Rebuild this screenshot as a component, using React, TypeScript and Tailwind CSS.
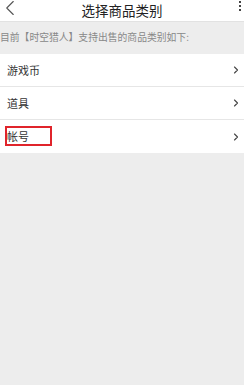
import { ChevronLeft, ChevronRight } from "lucide-react";

const CATEGORIES = ["游戏币", "道具", "帐号"];

const font = "font-['Noto_Sans_CJK_SC','Noto_Sans',sans-serif]";

function Row({ label, highlight }: { label: string; highlight?: boolean }) {
  return (
    <div className="flex h-[33px] items-center justify-between border-b border-[#e6e6e6] bg-white pl-[7px] pr-[2px] last:border-b-0">
      <span className="relative text-[11px] leading-none text-[#333]">
        {label}
        {highlight && (
          <span className="absolute -left-[2px] -top-[5px] h-[20px] w-[47px] border-2 border-[#e0242b]" />
        )}
      </span>
      <ChevronRight className="h-[12px] w-[12px] text-[#444]" strokeWidth={2.2} />
    </div>
  );
}

export default function App() {
  return (
    <div className={`${font} flex h-[385px] w-[244px] flex-col overflow-hidden bg-[#ededed]`}>
      <div className="relative flex h-[22px] shrink-0 items-center justify-center border-b border-[#e2e2e2] bg-white">
        <ChevronLeft className="absolute -top-[5px] -left-[3px] h-[26px] w-[26px] text-[#555]" strokeWidth={1} />
        <span className="text-[13.5px] leading-none text-[#222]">选择商品类别</span>
        <div className="absolute right-[3px] top-[1px] flex flex-col gap-[2px]">
          <span className="h-[2px] w-[2px] bg-[#444]" />
          <span className="h-[2px] w-[2px] bg-[#444]" />
          <span className="h-[2px] w-[2px] bg-[#444]" />
        </div>
      </div>
      <div className="flex h-[32px] shrink-0 items-center text-[9.8px] leading-none text-[#888]">
        目前【时空猎人】支持出售的商品类别如下:
      </div>
      <div className="flex flex-col">
        {CATEGORIES.map((c) => (
          <Row key={c} label={c} highlight={c === "帐号"} />
        ))}
      </div>
    </div>
  );
}
